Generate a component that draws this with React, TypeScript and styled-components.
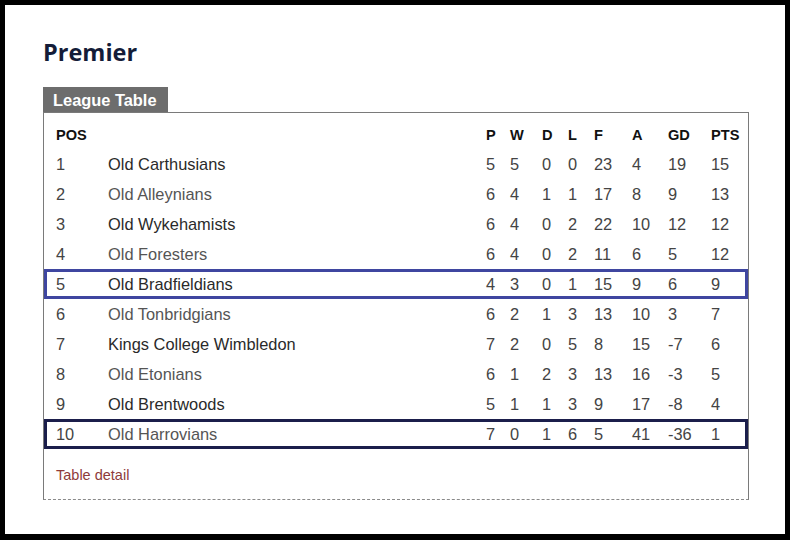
import React from "react";
import styled, { createGlobalStyle } from "styled-components";

const Global = createGlobalStyle`
  html, body { margin: 0; padding: 0; background: #000; }
  body { font-family: "Liberation Sans", Arial, sans-serif; }
`;

const Frame = styled.div`
  box-sizing: border-box;
  margin: 5px;
  width: 780px;
  height: 529px;
  background: #fff;
  padding: 33px 0 0 38px;
`;

const Title = styled.h1`
  margin: 0;
  font-family: "Open Sans", sans-serif;
  font-weight: 700;
  font-size: 23.5px;
  line-height: 28px;
  color: #141c38;
`;

const Tab = styled.div`
  display: inline-block;
  margin-top: 21px;
  height: 25px;
  padding: 0 11px 0 10px;
  background: #6d6d6d;
  color: #fff;
  font-weight: 700;
  font-size: 16.4px;
  line-height: 27px;
`;

const Box = styled.div`
  box-sizing: border-box;
  width: 706px;
  border: 1px solid #7a7a7a;
  border-bottom: 1px dashed #8a8a8a;
  padding-top: 7px;
`;

const Row = styled.div<{ $hl?: string; $head?: boolean }>`
  box-sizing: border-box;
  display: grid;
  grid-template-columns: 52px 1fr 24px 32px 26px 26px 38px 36px 43px 34px;
  align-items: center;
  height: ${(p) => (p.$head ? "29px" : "30px")};
  padding-left: 9px;
  border: 3px solid ${(p) => p.$hl ?? "transparent"};
  font-size: ${(p) => (p.$head ? "14.6px" : "16.4px")};
  font-weight: ${(p) => (p.$head ? 700 : 400)};
  color: ${(p) => (p.$head ? "#111" : "#444")};
`;

const Team = styled.span<{ $dark: boolean }>`
  color: ${(p) => (p.$dark ? "#2a2a2a" : "#555")};
  white-space: nowrap;
`;

const Footer = styled.div`
  padding: 16px 0 14px 12px;
  line-height: 20px;
`;

const Link = styled.a`
  color: #8e3b3b;
  font-size: 14.5px;
  text-decoration: none;
`;

type R = [number, string, number, number, number, number, number, number, number, number];

const rows: R[] = [
  [1, "Old Carthusians", 5, 5, 0, 0, 23, 4, 19, 15],
  [2, "Old Alleynians", 6, 4, 1, 1, 17, 8, 9, 13],
  [3, "Old Wykehamists", 6, 4, 0, 2, 22, 10, 12, 12],
  [4, "Old Foresters", 6, 4, 0, 2, 11, 6, 5, 12],
  [5, "Old Bradfieldians", 4, 3, 0, 1, 15, 9, 6, 9],
  [6, "Old Tonbridgians", 6, 2, 1, 3, 13, 10, 3, 7],
  [7, "Kings College Wimbledon", 7, 2, 0, 5, 8, 15, -7, 6],
  [8, "Old Etonians", 6, 1, 2, 3, 13, 16, -3, 5],
  [9, "Old Brentwoods", 5, 1, 1, 3, 9, 17, -8, 4],
  [10, "Old Harrovians", 7, 0, 1, 6, 5, 41, -36, 1],
];

const highlight: Record<number, string> = { 5: "#3f46a0", 10: "#1b1e4b" };

export default function App() {
  return (
    <>
      <Global />
      <Frame>
        <Title>Premier</Title>
        <Tab>League Table</Tab>
        <Box>
          <Row $head>
            <span>POS</span>
            <span></span>
            <span>P</span>
            <span>W</span>
            <span>D</span>
            <span>L</span>
            <span>F</span>
            <span>A</span>
            <span>GD</span>
            <span>PTS</span>
          </Row>
          {rows.map((r) => (
            <Row key={r[0]} $hl={highlight[r[0]]}>
              <span>{r[0]}</span>
              <Team $dark={r[0] % 2 === 1}>{r[1]}</Team>
              {r.slice(2).map((v, i) => (
                <span key={i}>{v}</span>
              ))}
            </Row>
          ))}
          <Footer>
            <Link href="#">Table detail</Link>
          </Footer>
        </Box>
      </Frame>
    </>
  );
}
